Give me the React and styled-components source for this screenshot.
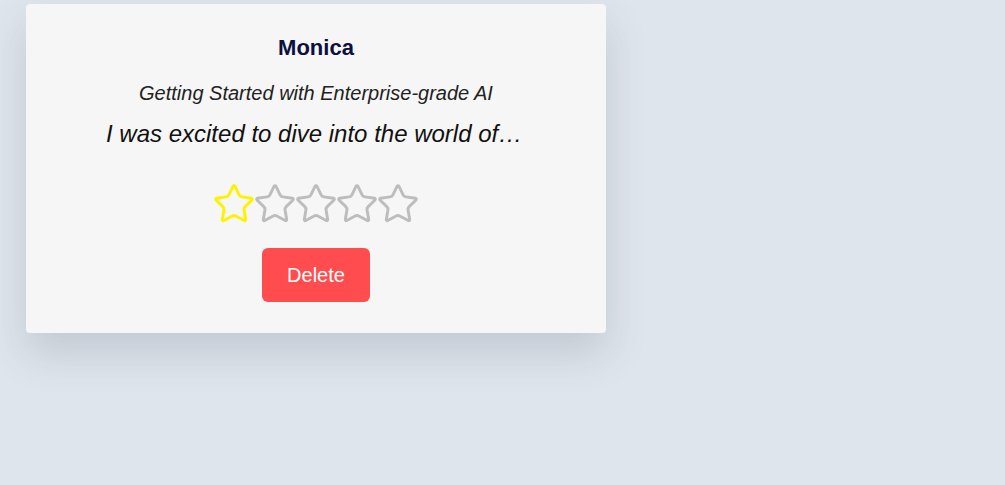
import React, { useState } from "react";
import styled, { createGlobalStyle } from "styled-components";
import { Star } from "lucide-react";

const GlobalStyle = createGlobalStyle`
  html, body {
    margin: 0;
    padding: 0;
    background: #dfe5ec;
    font-family: "Liberation Sans", Arial, sans-serif;
  }
`;

const Page = styled.div`
  min-height: 485px;
  padding: 4px 0 0 26px;
  box-sizing: border-box;
`;

const Card = styled.div`
  width: 580px;
  height: 329px;
  box-sizing: border-box;
  background: #f6f6f6;
  border-radius: 4px;
  box-shadow: 0 20px 40px rgba(60, 75, 95, 0.18);
  display: flex;
  flex-direction: column;
  align-items: center;
  padding: 31px 40px 0;
`;

const Name = styled.h3`
  margin: 0;
  font-size: 22px;
  font-weight: bold;
  color: #0b1040;
  line-height: 26px;
`;

const Course = styled.p`
  margin: 20px 0 0;
  font-size: 20px;
  font-style: italic;
  color: #222;
  line-height: 24px;
`;

const Review = styled.p`
  margin: 14px 0 0;
  max-width: 420px;
  font-size: 24px;
  font-style: italic;
  color: #111;
  line-height: 30px;
  white-space: nowrap;
  overflow: hidden;
  text-overflow: ellipsis;
`;

const Stars = styled.div`
  display: flex;
  margin-top: 33px;
`;

const StarIcon = styled(Star)`
  display: block;
  margin: 0 -1.5px;
  color: ${({ $on }) => ($on ? "#fff200" : "#bdbdbd")};
  cursor: pointer;
`;

const DeleteButton = styled.button`
  margin-top: 22px;
  width: 108px;
  height: 54px;
  border: none;
  border-radius: 6px;
  background: #ff4d4f;
  color: #fff;
  font-family: "Liberation Sans", Arial, sans-serif;
  font-size: 20px;
  cursor: pointer;
`;

function App() {
  const [rating, setRating] = useState(1);

  return (
    <Page>
      <GlobalStyle />
      <Card>
        <Name>Monica</Name>
        <Course>Getting Started with Enterprise-grade AI</Course>
        <Review>
          I was excited to dive into the world of AI and this course delivered
          everything I hoped for
        </Review>
        <Stars>
          {[1, 2, 3, 4, 5].map((n) => (
            <StarIcon
              key={n}
              size={44}
              strokeWidth={1.6}
              $on={n <= rating}
              onClick={() => setRating(n)}
            />
          ))}
        </Stars>
        <DeleteButton>Delete</DeleteButton>
      </Card>
    </Page>
  );
}

export default App;
